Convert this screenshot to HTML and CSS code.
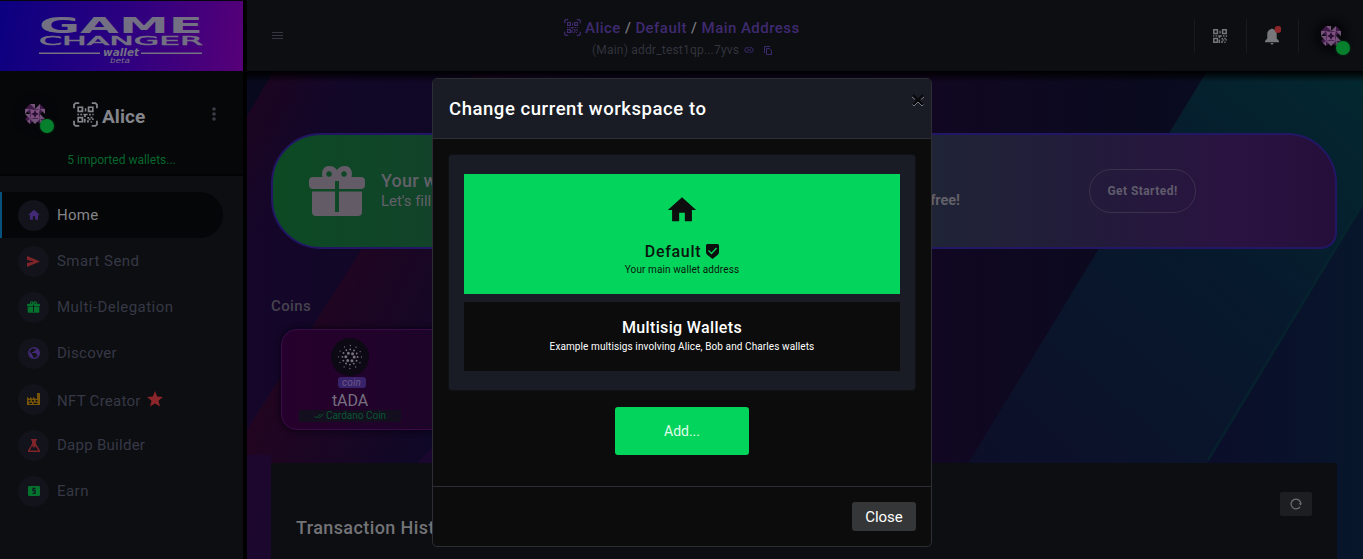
FILE: index.html
```html
<!DOCTYPE html>
<html lang="en">
<head>
<meta charset="utf-8">
<title>GameChanger Wallet</title>
<link rel="stylesheet" href="styles.css">
</head>
<body>
<svg class="defs" width="0" height="0">
  <symbol id="qr" viewBox="0 0 14 14">
    <path fill="none" stroke="currentColor" stroke-width="1.5" d="M.8.8h3.6v3.6H.8zM9.6.8h3.6v3.6H9.600zM.8 9.600h3.600v3.600H.8z"/>
    <path fill="currentColor" d="M6.4 1.8h1.3v2.7H6.4zM0 6.3h1.4v1.3H0zM2.6 6.3h1.6v1.3H2.6zM5.2 6.3h3.6v1.4H7.3v1.4H5.8V7.7h-.6zM10 6.3h1.5v1.5H10zM12.7 6.3H14v1.4h-1.3zM5.6 10.5h1.5V14H5.6zM8.500 9h1.600v1.500H8.500zM11.300 8.800h1.500v1.500h1.200v1.300h-1.500v-1.300h-1.200zM8.300 11.800h1.400v-1.300h1.500v1.300H9.800V14H8.300zM11.300 12.600h1.300V14h-1.300z"/>
  </symbol>
  <symbol id="scan" viewBox="0 0 24 24">
    <path fill="none" stroke="currentColor" stroke-width="1.7" d="M1 6V2.500L2.500 1H6M18 1h3.500L23 2.500V6M1 18v3.500L2.500 23H6M18 23h3.500l1.500-1.500V18"/>
    <use href="#qr" x="4" y="4" width="16" height="16"/>
  </symbol>
  <symbol id="avatar" viewBox="0 0 20 20">
    <path fill="#3f1a49" d="M5 0l5 5-5 5-5-5zM15 0l5 5-5 5-5-5zM5 10l5 5-5 5-5-5zM15 10l5 5-5 5-5-5z"/>
    <path fill="#75527a" d="M5 0h5v5zM10 5l5-5v5zM0 5h5L0 10zM0 10h5v5zM20 5v5l-5-5zM20 15l-5-5v5zM5 15v5l-3-3zM5 15h5l0 5zM10 15v5l5-5zM15 15v5l3-3z"/>
    <path fill="#7d5080" d="M5 5l4 1 1-1 1 1 4-1-1 4 1 1-1 1 1 4-4-1-1 1-1-1-4 1 1-4-1-1 1-1z"/>
    <path fill="#2a0f34" d="M10 6l1.300 2.700L14 10l-2.700 1.300L10 14l-1.300-2.700L6 10l2.700-1.300z"/>
  </symbol>
  <symbol id="home" viewBox="0 0 24 24"><path fill="currentColor" d="M10 20v-6h4v6h5v-8h3L12 3 2 12h3v8z"/></symbol>
  <symbol id="gift" viewBox="0 0 56 50">
    <path fill="currentColor" fill-rule="evenodd" d="M20 0c4 0 6 1.500 8 4 2-2.500 4-4 8-4 6 0 8 6 6.500 11H52q4 0 4 4v4q0 4-4 4H30v-8h-4v8H4q-4 0-4-4v-4q0-4 4-4h9.500C12 6 14 0 20 0zm0 5.200a2.800 2.800 0 1 0 .1 0zm15 0a2.800 2.800 0 1 0 .1 0zM3 25.500h23V46h4V25.500h23V46q0 4-4 4H7q-4 0-4-4z"/>
  </symbol>
</svg>

<div class="app">
  <aside class="sidebar">
    <div class="brand">
      <svg width="164" height="64" viewBox="0 -10 164 64" fill="#737084">
        <g font-family="DejaVu Sans, sans-serif" font-weight="bold">
          <text x="0" y="16" font-size="21.500" textLength="164" lengthAdjust="spacingAndGlyphs">GAME</text>
          <text x="0" y="27.500" font-size="12" font-weight="normal" stroke="#737084" stroke-width=".5" textLength="164" lengthAdjust="spacingAndGlyphs">CHANGER</text>
        </g>
        <path d="M0 35.500h61v1.500H0zM102 35.500h61v1.500h-61z"/>
        <g font-family="DejaVu Sans, sans-serif" font-style="italic">
          <text x="64" y="39" font-size="10.500" font-weight="bold" textLength="36" lengthAdjust="spacingAndGlyphs">wallet</text>
          <text x="71" y="46" font-size="7.500" textLength="20" lengthAdjust="spacingAndGlyphs">beta</text>
        </g>
      </svg>
    </div>
    <div class="profile">
      <div class="profile-row">
        <span class="avatar"><svg width="20" height="20"><use href="#avatar"/></svg><i></i></span>
        <span class="profile-name"><svg width="25" height="25"><use href="#scan"/></svg><b>Alice</b></span>
        <svg class="dots" width="4" height="14" fill="currentColor"><circle cx="2" cy="2" r="1.800"/><circle cx="2" cy="7" r="1.800"/><circle cx="2" cy="12" r="1.800"/></svg>
      </div>
      <p class="imported">5 imported wallets...</p>
    </div>
    <nav class="menu">
      <a class="active"><span class="ico violet"><svg width="14" height="14"><use href="#home"/></svg></span><span>Home</span></a>
      <a><span class="ico red"><svg width="13" height="11" viewBox="0 0 13 11" fill="currentColor"><path d="M0 0l13 5.500L0 11V7l7-1.500L0 4z"/></svg></span><span class="wide">Smart Send</span></a>
      <a><span class="ico green"><svg width="13" height="12"><use href="#gift"/></svg></span><span class="wide">Multi-Delegation</span></a>
      <a><span class="ico violet"><svg width="12" height="12" viewBox="0 0 12 12"><circle cx="6" cy="6" r="5.300" fill="none" stroke="currentColor" stroke-width="1.300"/><path fill="currentColor" d="M1 4l3 3v1l1 1v2.500L2 9.500zM5 1h4l-1 2-2 1v1H4v1h4l1 2 1 1-1 2 2.500-3V5L10 2z"/></svg></span><span>Discover</span></a>
      <a><span class="ico gold"><svg width="13" height="12" viewBox="0 0 13 12"><path fill="currentColor" fill-rule="evenodd" d="M0 12V4l3 2V4l3 2V4l3 2h1V0h3v12zM1.500 7v1.500h2V7zm3.500 0v1.500h2V7zm3.500 0v1.500h2V7zM2 9.800V11h3V9.800zm4.500 0V11h4V9.800z"/></svg></span><span class="nft">NFT Creator <svg class="star" width="16" height="16" viewBox="0 0 16 16"><path fill="#8a2529" d="M8 0l2.200 5.400L16 6l-4.500 3.800L13 15.600 8 12.500l-5 3.100 1.500-5.800L0 6l5.800-.6z"/></svg></span></a>
      <a><span class="ico red"><svg width="12" height="13" viewBox="0 0 12 13"><path fill="currentColor" fill-rule="evenodd" d="M3 0h6v1.500H8v3.300l4 6.700V13H0v-1.500l4-6.700V1.500H3zM4.300 6.500l-2.500 5h8.500L7.500 7 7 9 6 7.500 5 9z"/></svg></span><span>Dapp Builder</span></a>
      <a><span class="ico green"><svg width="12" height="10" viewBox="0 0 12 10"><rect width="12" height="10" rx="1.200" fill="currentColor"/><path d="M7.500 2.300H5v2.200h2v2.800H4.500" fill="none" stroke="#111820" stroke-width="1.300"/></svg></span><span class="wide">Earn</span></a>
    </nav>
  </aside>

  <div class="main">
    <header class="topbar">
      <svg class="burger" width="11" height="8" fill="currentColor"><path d="M0 0h11v1H0zM0 3h11v1H0zM0 6h11v1H0z"/></svg>
      <div class="crumbs">
        <div class="crumb-line"><svg width="17" height="17"><use href="#scan"/></svg><span>Alice <i>/</i> Default <i>/</i> Main Address</span></div>
        <div class="addr"><span>(Main) addr_test1qp...7yvs</span>
          <svg width="10" height="6" viewBox="0 0 10 6" fill="none" stroke="currentColor"><path d="M4.500.7H3a2.200 2.200 0 0 0 0 4.500h1.500M5.500.7H7a2.200 2.200 0 0 1 0 4.500H5.500M3 3h4"/></svg>
          <svg width="8" height="9" viewBox="0 0 8 9" fill="none" stroke="currentColor"><path d="M.5 7V.5H6M2.500 2.500h2.500l2.500 2v4h-5z"/></svg>
        </div>
      </div>
      <div class="tools">
        <span class="tool"><svg width="14" height="14"><use href="#qr"/></svg></span>
        <span class="tool"><svg width="17" height="20" viewBox="0 0 17 20"><path fill="#77777b" d="M7 3a1.500 1.500 0 0 1 2 0c3 1 3.700 3 3.700 5v4.500L15 15v1.200H1V15l2.300-2.500V8c0-2 .7-4 3.700-5zM6.500 17h3a1.500 1.500 0 0 1-3 0z"/><circle cx="14" cy="3.500" r="3.400" fill="#8e2629"/></svg></span>
        <span class="tool user"><span class="avatar"><svg width="20" height="20"><use href="#avatar"/></svg><i></i></span></span>
      </div>
    </header>

    <section class="content">
      <svg class="backdrop" width="1116" height="488" viewBox="247 71 1116 488" preserveAspectRatio="none">
        <defs>
          <linearGradient id="base"><stop offset="0" stop-color="#15062a"/><stop offset=".2" stop-color="#0e0824"/><stop offset=".62" stop-color="#110722"/><stop offset=".8" stop-color="#0a0a1e"/><stop offset="1" stop-color="#080f28"/></linearGradient>
          <linearGradient id="teal" x1="1" y1="0" x2=".2" y2="1"><stop offset="0" stop-color="#03282f"/><stop offset=".4" stop-color="#07192d"/><stop offset="1" stop-color="#0e0d27"/></linearGradient>
          <linearGradient id="blue"><stop offset="0" stop-color="#0d0a29"/><stop offset="1" stop-color="#07162b"/></linearGradient>
          <linearGradient id="wine" gradientUnits="userSpaceOnUse" x1="247" y1="430" x2="400" y2="500"><stop offset="0" stop-color="#220520"/><stop offset=".45" stop-color="#1a0624"/><stop offset="1" stop-color="#0f0826"/></linearGradient>
          <linearGradient id="corner" gradientUnits="userSpaceOnUse" x1="255" y1="90" x2="320" y2="125"><stop offset="0" stop-color="#1c0520"/><stop offset="1" stop-color="#1c0520" stop-opacity="0"/></linearGradient>
          <linearGradient id="shade" x2="0" y2="1"><stop offset="0" stop-color="#000"/><stop offset="1" stop-color="#000" stop-opacity="0"/></linearGradient>
        </defs>
        <path fill="url(#base)" d="M247 71h1116v488H247z"/>
        <path fill="#08091c" d="M247 71h27l-27 45z"/>
        <path fill="url(#corner)" d="M274 71h100L247 290V116z"/>
        <path fill="url(#wine)" d="M475 71h200v488H247V430z"/>
        <path fill="#1d0732" d="M247 455h24v104h-24zM450 430v40h-40z" opacity=".8"/>
        <path fill="url(#teal)" d="M1207 71h156v134L1150 559H910z"/>
        <path fill="url(#blue)" d="M1363 205v354h-213z"/>
        <path stroke="#06272f" stroke-width="3" opacity=".6" d="M1363 203L1208 460"/>
        <path fill="url(#shade)" d="M247 71h1116v11H247z"/>
      </svg>
      <div class="banner">
        <svg class="gift" width="56" height="50"><use href="#gift"/></svg>
        <div class="banner-text"><h3>Your wallet</h3><p><span>Let's fill it</span><b>free!</b></p></div>
        <button class="start">Get Started!</button>
      </div>
      <h4 class="section-title">Coins</h4>
      <div class="coin-card">
        <div class="coin">
          <span class="coin-logo"><svg width="26" height="26" viewBox="-13 -13 26 26" stroke="#77737d" stroke-linecap="round" fill="none">
            <circle r="4.200" stroke-width="3" stroke-dasharray="0 4.398"/>
            <circle r="7.600" stroke-width="1.900" stroke-dasharray="0 3.979"/>
            <circle r="11.500" stroke-width="1.300" stroke-dasharray="0 6.021"/></svg></span>
          <span class="tag">coin</span>
          <span class="ticker">tADA</span>
          <span class="verified"><svg width="10" height="6" viewBox="0 0 10 6" fill="none" stroke="currentColor"><path d="M.5 3l2 2 4-4M4.500 4.500l.7.500L9.500.8"/></svg><span>Cardano Coin</span></span>
        </div>
      </div>
      <div class="history">
        <h2>Transaction History</h2>
        <button class="refresh"><svg width="12" height="12" viewBox="0 0 12 12"><path d="M10.800 5A4.900 4.900 0 1 0 10 8.800" fill="none" stroke="#6c6c70" stroke-width="1.300"/><path d="M8.800 5.200H12L10.500 7.500z" fill="#77777b"/></svg></button>
      </div>
    </section>
  </div>
</div>

<div class="modal">
  <div class="modal-head">
    <h2>Change current workspace to</h2>
    <svg class="x" width="14" height="13" viewBox="0 0 14 13" fill="none"><path d="M2 1l5 5 5-5M2 11l5-5 5 5" stroke="#08090c" stroke-width="2.200"/><path d="M1 3l3 2.500M13 3l-3 2.500M1.500 10.500l1.500 1.500 4-4 4 4 1.500-1.500" stroke="#77797e"/></svg>
  </div>
  <div class="modal-body">
    <div class="spaces">
      <div class="space chosen">
        <svg class="space-icon" width="34" height="34"><use href="#home"/></svg>
        <strong><span>Default</span> <svg width="13" height="15" viewBox="0 0 13 15"><path fill="#0d0e0d" d="M1.500 0h10Q13 0 13 1.500V8q0 2-1.500 3l-5 4-5-4Q0 10 0 8V1.500Q0 0 1.500 0z"/><path d="M2.500 6.500l3 3 5-5.500" fill="none" stroke="#04d65d" stroke-width="1.400"/></svg></strong>
        <small>Your main wallet address</small>
      </div>
      <div class="space">
        <strong>Multisig Wallets</strong>
        <small>Example multisigs involving Alice, Bob and Charles wallets</small>
      </div>
    </div>
    <button class="add">Add...</button>
  </div>
  <div class="modal-foot"><button class="close">Close</button></div>
</div>
</body>
</html>
```
FILE: styles.css
```css
* { box-sizing: border-box; }
body { margin: 0; width: 1363px; height: 559px; overflow: hidden; background: #000; color: #77777b; font-family: Roboto, "Open Sans", sans-serif; font-size: 15px; }
h2, h3, h4, p { margin: 0; font-weight: 500; }
button { border: 0; padding: 0; font-family: inherit; }
svg { display: block; flex: none; }
.defs { position: absolute; }
.app { display: grid; grid-template-columns: 243px 1fr; column-gap: 4px; height: 559px; }

.sidebar { background: #0c0e11; display: flex; flex-direction: column; }
.brand { height: 71px; padding: 6px 0 0 39px; background: linear-gradient(100deg, #0b0080, #2b0080 50%, #570078); border-top: 1px solid #05050c; }
.profile { height: 105px; background: #060709; border-bottom: 2px solid #020304; }
.profile-row { display: flex; height: 86px; padding: 0 27px 0 25px; align-items: center; }
.avatar { position: relative; display: block; width: 20px; height: 20px; border-radius: 50%; box-shadow: 0 0 6px 6px #07060a; }
.avatar i { position: absolute; left: 15px; top: 15px; width: 14px; height: 14px; border-radius: 50%; background: #07802d; box-shadow: 0 0 3px #063b18; }
.profile-name { display: flex; flex: 1; align-items: center; gap: 4px; margin-left: 28px; color: #84858a; }
.profile-name b { font-size: 19px; font-weight: 700; letter-spacing: .1px; margin-top: 5px; }
.dots { color: #3c3c48; }
.imported { font-size: 12px; line-height: 14px; margin-top: -4px; text-align: center; color: #07662c; font-weight: 400; }
.menu { padding-top: 16px; display: flex; flex-direction: column; }
.menu a { display: flex; align-items: center; gap: 8px; height: 46px; padding-left: 18px; color: #373846; letter-spacing: .27px; }
.menu .wide { letter-spacing: .46px; }
.menu .nft { margin-top: 2px; }
.menu .active { width: 223px; background: #050607; border-left: 2px solid #07517c; border-radius: 0 23px 23px 0; padding-left: 16px; color: #85868a; }
.ico { width: 31px; height: 31px; border-radius: 50%; background: #12131b; display: grid; place-items: center; }
.violet { color: #432a76; } .red { color: #7f2429; } .green { color: #05722e; } .gold { color: #795506; }
.star { display: inline-block; vertical-align: -1px; margin-left: 2px; }

.main { display: flex; flex-direction: column; min-width: 0; }
.topbar { height: 71px; background: #0c0e11; display: flex; align-items: flex-start; }
.burger { margin: 32px 0 0 25px; color: #353641; }
.crumbs { width: 260px; margin: 19px 0 0 281px; color: #3f2a70; display: flex; flex-direction: column; }
.crumb-line { display: flex; gap: 4px; font-weight: 500; font-size: 15px; line-height: 18px; letter-spacing: .45px; white-space: nowrap; }
.crumb-line i { font-style: normal; color: #77777b; }
.addr { display: flex; align-items: center; font-size: 12px; line-height: 14px; margin-top: 6px; padding-left: 28px; color: #32333d; letter-spacing: .2px; }
.addr svg { color: #3c2a70; margin-left: 5px; }
.addr svg + svg { margin-left: 10px; }
.tools { margin: 19px 0 0 auto; display: flex; }
.tool { width: 52px; height: 34px; padding-right: 1px; border-left: 1px solid #191a20; display: grid; place-items: center; }
.user { width: 65px; padding-right: 0; }

.content { position: relative; z-index: 0; flex: 1; padding: 62px 26px 0 24px; overflow: hidden; }
.backdrop { position: absolute; left: 0; top: 0; z-index: -1; }
.banner { height: 116px; border: 2px solid #221765; border-radius: 50px 50px 16px 50px; background: linear-gradient(90deg, #0c4a23, #12432a 15%, #1f2536 60%, #221c3a 76%, #2a1341 90%, #250f3a); display: flex; align-items: center; padding-left: 36px; color: #626068; }
.gift { color: #635c66; }
.banner-text { width: 708px; margin-left: 16px; }
.banner h3 { font-size: 18px; line-height: 21px; margin-top: -1px; letter-spacing: .2px; }
.banner p { display: flex; font-size: 15px; line-height: 20px; font-weight: 400; letter-spacing: -.05px; }
.banner p b { margin-left: 487px; font-weight: 700; font-size: 14.500px; }
.start { width: 107px; height: 44px; border: 1px solid #3a314d; border-radius: 22px; background: transparent; color: #605c6c; font-weight: 700; font-size: 12px; letter-spacing: .45px; }
.section-title { margin-top: 48px; color: #46434f; font-size: 15px; line-height: 18px; letter-spacing: .4px; }
.coin-card { width: 600px; height: 101px; margin: 14px 0 0 10px; border: 1px solid #3b0b49; border-radius: 16px; background: linear-gradient(90deg, #26002c, #1d0429 150px); box-shadow: 0 0 6px #06000e; padding: 8px 0 0 17px; }
.coin { width: 102px; display: flex; flex-direction: column; align-items: center; }
.coin-logo { width: 38px; height: 38px; border-radius: 50%; background: #0d0914; display: grid; place-items: center; }
.tag { width: 28px; height: 11px; margin: 1px 0 0 3px; border-radius: 3px; background: #38226a; color: #6c5a8c; font-size: 10px; font-style: italic; line-height: 11px; text-align: center; letter-spacing: .2px; }
.ticker { margin-top: 4px; font-size: 16px; line-height: 18px; letter-spacing: -.1px; color: #77707f; }
.verified { width: 102px; height: 12px; background: #130f1e; color: #0b5633; font-size: 10px; line-height: 12px; display: flex; align-items: center; justify-content: center; gap: 2px; }
.history { height: 120px; margin-top: 33px; padding: 0 25px; background: #0c0e11; border-radius: 3px 3px 0 0; display: flex; justify-content: space-between; align-items: flex-start; }
.history h2 { margin-top: 54px; font-size: 18px; line-height: 22px; letter-spacing: .4px; color: #747478; }
.refresh { width: 32px; height: 24px; margin-top: 29px; border-radius: 2px; background: #1d1e21; display: grid; place-items: center; }

.modal { position: absolute; z-index: 5; left: 432px; top: 78px; width: 500px; height: 469px; border: 1px solid #2c2e34; border-radius: 5px; background: #0c0c0c; display: flex; flex-direction: column; overflow: hidden; }
.modal-head { height: 60px; background: #191c24; border-bottom: 1px solid #2c2e33; display: flex; align-items: flex-start; justify-content: space-between; padding: 19px 6px 0 16px; }
.modal-head h2 { font-size: 18.500px; line-height: 22px; letter-spacing: .56px; color: #fff; }
.x { margin-top: -4px; }
.modal-body { height: 348px; padding: 16px; border-bottom: 1px solid #2c2e33; display: flex; flex-direction: column; align-items: center; }
.spaces { width: 466px; height: 235px; padding: 19px 15px; background: #191c24; border-radius: 3px; display: flex; flex-direction: column; gap: 8px; box-shadow: 0 0 3px #191c24; }
.space { height: 69px; background: #0c0c0c; color: #fff; display: flex; flex-direction: column; align-items: center; padding-top: 16px; }
.chosen { height: 120px; background: #03d55c; color: #0b170e; padding-top: 19px; }
.space-icon { margin-bottom: 15px; color: #0d0e0d; }
.space strong { font-weight: 500; font-size: 16px; line-height: 19px; letter-spacing: .35px; display: flex; align-items: center; gap: 5px; }
.chosen strong { letter-spacing: .7px; }
.space small { font-size: 10px; line-height: 12px; margin-top: 4px; letter-spacing: .1px; }
.chosen small { margin-top: 3px; }
.add { width: 134px; height: 48px; margin-top: 17px; border-radius: 3px; background: #03d55c; color: #e0fbea; font-size: 14px; }
.modal-foot { display: flex; justify-content: flex-end; padding: 15px; }
.close { width: 64px; height: 29px; border-radius: 3px; background: #353637; color: #fff; font-size: 15px; }
```
